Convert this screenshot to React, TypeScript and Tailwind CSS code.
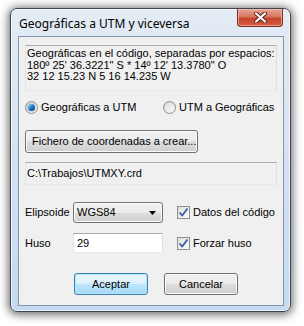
import * as React from "react";

const uiFont = "font-['Liberation_Sans',Arial,sans-serif] text-[11px] text-black";

function Radio({ checked, label }: { checked?: boolean; label: string }) {
  return (
    <div className="flex items-center gap-[3px]">
      <span className="flex h-[13px] w-[13px] items-center justify-center rounded-full border border-[#8e8f8f] bg-gradient-to-br from-[#d0d0d0] to-[#f8f8f8]">
        {checked ? (
          <span className="h-[7px] w-[7px] rounded-full bg-gradient-to-br from-[#9fe0ff] via-[#1c78c4] to-[#0b3f7c] shadow-[0_0_1px_#0d4d8f]" />
        ) : (
          <span className="h-[9px] w-[9px] rounded-full bg-gradient-to-br from-[#dcdcdc] to-[#fbfbfb]" />
        )}
      </span>
      <span>{label}</span>
    </div>
  );
}

function Check({ label }: { label: string }) {
  return (
    <div className="flex items-center gap-[3px]">
      <span className="flex h-[13px] w-[13px] items-center justify-center border border-[#8e8f8f] bg-gradient-to-br from-[#dedede] to-[#fbfbfb]">
        <svg width="11" height="11" viewBox="0 0 11 11">
          <path d="M1.5 5.5 L4.2 8.5 L9.5 1.5" fill="none" stroke="#3c5a9e" strokeWidth="1.8" strokeLinejoin="round" />
        </svg>
      </span>
      <span>{label}</span>
    </div>
  );
}

function WinButton({ label, width, primary }: { label: string; width: string; primary?: boolean }) {
  return (
    <div
      className={`flex items-center justify-center rounded-[3px] border ${width} ${
        primary
          ? "border-[#3c7fb1] bg-[linear-gradient(#eaf6fd_0%,#d9f0fc_50%,#bee6fd_50%,#a7d9f5_100%)] shadow-[inset_0_0_0_1px_#b8e4fb]"
          : "border-[#707070] bg-[linear-gradient(#f2f2f2_0%,#ebebeb_50%,#dddddd_50%,#cfcfcf_100%)] shadow-[inset_0_0_0_1px_#fcfcfc]"
      }`}
    >
      {label}
    </div>
  );
}

export default function App() {
  return (
    <div className="h-[326px] w-[304px] bg-white pl-[10px] pt-[8px]">
      <div className="flex h-[304px] w-[281px] flex-col rounded-[7px] border border-[#3f4650] bg-gradient-to-b from-[#e4ecf5] via-[#d4e2f1] to-[#c5d9f0] pb-[5px] pl-[7px] pr-[6px] shadow-[0_1px_8px_2px_rgba(0,0,0,0.55),inset_0_0_0_1px_rgba(255,255,255,0.7)]">
        <div className="flex h-[27px] items-start justify-between">
          <span className="mt-[7px] pl-[1px] font-['Noto_Sans',sans-serif] text-[12px] leading-[16px] text-black">
            Geográficas a UTM y viceversa
          </span>
          <div className="mr-[1px] flex h-[18px] w-[46px] items-center justify-center rounded-b-[4px] border border-t-0 border-[#7a2d22] bg-[linear-gradient(#e9a597_0%,#d8775f_45%,#c4432b_55%,#d45c3f_100%)] shadow-[inset_0_0_0_1px_rgba(255,200,190,0.6)]">
            <svg width="13" height="11" viewBox="0 0 13 11">
              <path d="M2 1.5 L11 9.5 M11 1.5 L2 9.5" stroke="#5a2018" strokeWidth="4" strokeLinecap="round" />
              <path d="M2 1.5 L11 9.5 M11 1.5 L2 9.5" stroke="#ffffff" strokeWidth="2.2" strokeLinecap="round" />
            </svg>
          </div>
        </div>

        <div className={`flex flex-1 flex-col border border-[#8395a8] bg-[#f0f0f0] pl-[6px] ${uiFont}`}>
          <div className="mt-[8px] h-[46px] w-[252px] border border-[#abadb3] border-b-[#e3e9ef] border-l-[#e2e3ea] border-r-[#dbdfe6] pl-[1px] pt-[2px] leading-[11.5px]">
            <div>Geográficas en el código, separadas por espacios:</div>
            <div>180º 25' 36.3221" S * 14º 12' 13.3780" O</div>
            <div>32 12 15.23 N 5 16 14.235 W</div>
          </div>

          <div className="mt-[10px] flex h-[13px] items-center">
            <div className="w-[138px]">
              <Radio checked label="Geográficas a UTM" />
            </div>
            <Radio label="UTM a Geográficas" />
          </div>

          <div className="mt-[16px] flex">
            <div className="flex h-[23px] w-[173px] items-center rounded-[3px] border border-[#707070] bg-[linear-gradient(#f2f2f2_0%,#ebebeb_50%,#dddddd_50%,#cfcfcf_100%)] pl-[6px] shadow-[inset_0_0_0_1px_#fcfcfc]">
              Fichero de coordenadas a crear...
            </div>
          </div>

          <div className="mt-[9px] flex h-[23px] w-[252px] items-center border border-[#abadb3] border-b-[#e3e9ef] border-l-[#e2e3ea] border-r-[#dbdfe6] pl-[1px]">
            C:\Trabajos\UTMXY.crd
          </div>

          <div className="mt-[17px] flex h-[21px] items-center">
            <span className="w-[48px]">Elipsoide</span>
            <div className="flex h-[21px] w-[90px] items-center justify-between rounded-[3px] border border-[#707070] bg-[linear-gradient(#f2f2f2_0%,#ebebeb_50%,#dddddd_50%,#cfcfcf_100%)] pl-[3px] pr-[6px] shadow-[inset_0_0_0_1px_#fcfcfc]">
              <span>WGS84</span>
              <svg width="7" height="4" viewBox="0 0 7 4">
                <path d="M0 0 H7 L3.5 4 Z" fill="#000" />
              </svg>
            </div>
            <div className="ml-[14px]">
              <Check label="Datos del código" />
            </div>
          </div>

          <div className="mt-[10px] flex h-[20px] items-center">
            <span className="w-[48px]">Huso</span>
            <div className="flex h-[20px] w-[90px] items-center border border-[#abadb3] border-b-[#e3e9ef] border-l-[#e2e3ea] border-r-[#dbdfe6] bg-white pl-[3px]">
              29
            </div>
            <div className="ml-[14px]">
              <Check label="Forzar huso" />
            </div>
          </div>

          <div className="ml-[49px] mt-[20px] flex h-[22px] gap-[16px]">
            <WinButton label="Aceptar" width="w-[74px]" primary />
            <WinButton label="Cancelar" width="w-[74px]" />
          </div>
        </div>
      </div>
    </div>
  );
}
